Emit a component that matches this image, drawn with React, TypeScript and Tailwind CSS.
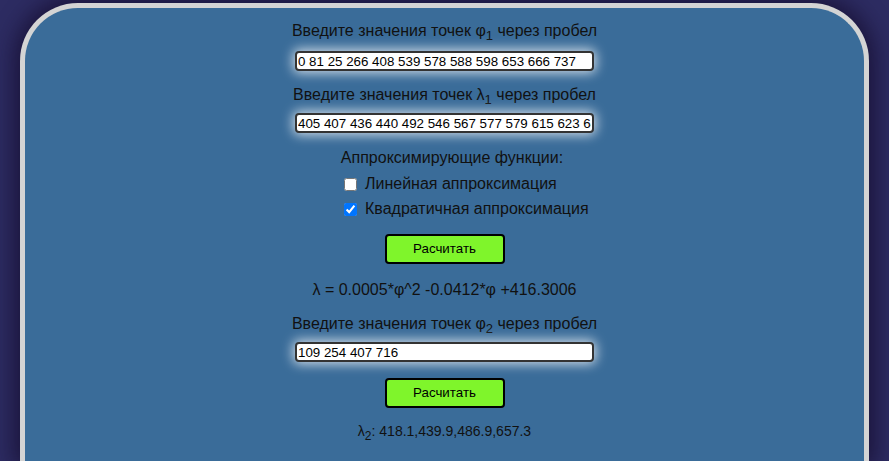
import React from "react";

const inputCls =
  "block w-[299px] h-[20px] mt-[11px] border-2 border-[#333] rounded-[4px] bg-white pl-[1px] pr-[1px] text-[13.333px] text-black leading-[16px] outline-none shadow-[0_0_12px_2px_rgba(255,255,255,0.75)] overflow-hidden";

const btnCls =
  "block w-[120px] h-[30px] border-2 border-black rounded-[4px] bg-[#7ff52b] text-[13.333px] text-black leading-none";

const subCls = "text-[13px] align-[-4px] leading-none static";

export default function App() {
  return (
    <div className="h-[461px] bg-[#2d2c62] pt-[3px] px-[20px] overflow-hidden" style={{ fontFamily: '"Liberation Sans", Arial, sans-serif' }}>
      <div className="h-[458px] border-[5px] border-b-0 border-[#d4d4d4] rounded-t-[58px] bg-[#3a6c99] shadow-[0_0_22px_6px_rgba(20,12,45,0.75)] flex flex-col items-center text-[#111] text-[16px] leading-[18px] pt-[14px] overflow-hidden">
        <div className="h-[18px] whitespace-nowrap">
          Введите значения точек φ<span className={subCls}>1</span> через пробел
        </div>
        <input className={inputCls} defaultValue="0 81 25 266 408 539 578 588 598 653 666 737" />
        <div className="h-[18px] mt-[15px] whitespace-nowrap">
          Введите значения точек λ<span className={subCls}>1</span> через пробел
        </div>
        <input className={inputCls + " !mt-[9px]"} defaultValue="405 407 436 440 492 546 567 577 579 615 623 640" />
        <div className="h-[18px] mt-[16px] whitespace-nowrap pl-[15px]">Аппроксимирующие функции:</div>
        <div className="self-start ml-[319px] flex flex-col">
          <label className="h-[18px] mt-[8px] flex items-center whitespace-nowrap">
            <input type="checkbox" className="w-[13px] h-[13px] m-0 mr-[8px]" />
            Линейная аппроксимация
          </label>
          <label className="h-[18px] mt-[7px] flex items-center whitespace-nowrap">
            <input type="checkbox" defaultChecked className="w-[13px] h-[13px] m-0 mr-[8px]" />
            Квадратичная аппроксимация
          </label>
        </div>
        <button className={btnCls + " mt-[16px]"}>Расчитать</button>
        <div className="h-[18px] mt-[17px] whitespace-nowrap">
          λ = 0.0005*φ^2 -0.0412*φ +416.3006
        </div>
        <div className="h-[18px] mt-[16px] whitespace-nowrap">
          Введите значения точек φ<span className={subCls}>2</span> через пробел
        </div>
        <input className={inputCls + " !mt-[9px]"} defaultValue="109 254 407 716" />
        <button className={btnCls + " mt-[16px]"}>Расчитать</button>
        <div className="h-[16px] mt-[15px] text-[14px] leading-[16px] whitespace-nowrap">
          λ<span className="text-[12px] align-[-4px] leading-none">2</span>: 418.1,439.9,486.9,657.3
        </div>
      </div>
    </div>
  );
}
